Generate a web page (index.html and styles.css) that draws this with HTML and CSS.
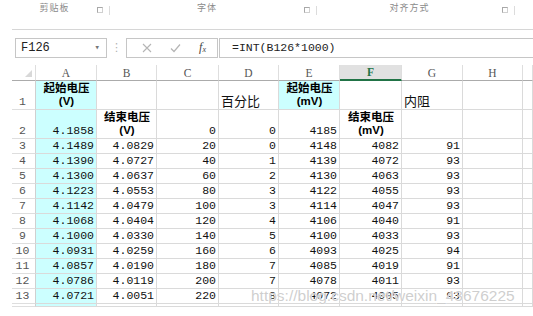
FILE: index.html
```html
<!DOCTYPE html>
<html>
<head>
<meta charset="utf-8">
<title>Sheet</title>
<link rel="stylesheet" href="styles.css">
</head>
<body>
<div class="ribbon">
  <div class="group g1"><span class="glabel">剪贴板</span><span class="launch"></span></div>
  <div class="group g2"><span class="glabel">字体</span><span class="launch"></span></div>
  <div class="group g3"><span class="glabel">对齐方式</span><span class="launch"></span></div>
</div>

<div class="fbar">
  <div class="namebox"><span>F126</span><span class="drop">&#9662;</span></div>
  <div class="dots">&#8942;</div>
  <div class="iconbox">
    <svg width="10" height="10" viewBox="0 0 10 10"><path d="M1 1L9 9M9 1L1 9" stroke="#b5b5b5" stroke-width="1.1" fill="none"/></svg>
    <svg width="11" height="10" viewBox="0 0 11 10"><path d="M1 5.5L4 8.5L10 1.5" stroke="#b5b5b5" stroke-width="1.2" fill="none"/></svg>
    <span class="fx">f<sub>x</sub></span>
  </div>
  <div class="formula">=INT(B126*1000)</div>
</div>

<div class="sheet">
  <div class="hd corner"><span class="tri"></span></div>
  <div class="hd">A</div><div class="hd">B</div><div class="hd">C</div><div class="hd">D</div>
  <div class="hd">E</div><div class="hd sel">F</div><div class="hd">G</div><div class="hd">H</div><div class="hd"></div>

  <div class="rh">1</div>
  <div class="c cy lbl"><span>起始电压</span><span>(V)</span></div>
  <div class="c"></div><div class="c"></div>
  <div class="c txt">百分比</div>
  <div class="c cy lbl"><span>起始电压</span><span>(mV)</span></div>
  <div class="c"></div>
  <div class="c txt">内阻</div>
  <div class="c"></div><div class="c"></div>

  <div class="rh">2</div>
  <div class="c cy n">4.1858</div>
  <div class="c lbl"><span>结束电压</span><span>(V)</span></div>
  <div class="c n">0</div><div class="c n">0</div><div class="c n">4185</div>
  <div class="c lbl"><span>结束电压</span><span>(mV)</span></div>
  <div class="c"></div><div class="c"></div><div class="c"></div>

  <div class="rh">3</div><div class="c cy n">4.1489</div><div class="c n">4.0829</div><div class="c n">20</div><div class="c n">0</div><div class="c n">4148</div><div class="c n">4082</div><div class="c n">91</div><div class="c"></div><div class="c"></div>
  <div class="rh">4</div><div class="c cy n">4.1390</div><div class="c n">4.0727</div><div class="c n">40</div><div class="c n">1</div><div class="c n">4139</div><div class="c n">4072</div><div class="c n">93</div><div class="c"></div><div class="c"></div>
  <div class="rh">5</div><div class="c cy n">4.1300</div><div class="c n">4.0637</div><div class="c n">60</div><div class="c n">2</div><div class="c n">4130</div><div class="c n">4063</div><div class="c n">93</div><div class="c"></div><div class="c"></div>
  <div class="rh">6</div><div class="c cy n">4.1223</div><div class="c n">4.0553</div><div class="c n">80</div><div class="c n">3</div><div class="c n">4122</div><div class="c n">4055</div><div class="c n">93</div><div class="c"></div><div class="c"></div>
  <div class="rh">7</div><div class="c cy n">4.1142</div><div class="c n">4.0479</div><div class="c n">100</div><div class="c n">3</div><div class="c n">4114</div><div class="c n">4047</div><div class="c n">93</div><div class="c"></div><div class="c"></div>
  <div class="rh">8</div><div class="c cy n">4.1068</div><div class="c n">4.0404</div><div class="c n">120</div><div class="c n">4</div><div class="c n">4106</div><div class="c n">4040</div><div class="c n">91</div><div class="c"></div><div class="c"></div>
  <div class="rh">9</div><div class="c cy n">4.1000</div><div class="c n">4.0330</div><div class="c n">140</div><div class="c n">5</div><div class="c n">4100</div><div class="c n">4033</div><div class="c n">93</div><div class="c"></div><div class="c"></div>
  <div class="rh">10</div><div class="c cy n">4.0931</div><div class="c n">4.0259</div><div class="c n">160</div><div class="c n">6</div><div class="c n">4093</div><div class="c n">4025</div><div class="c n">94</div><div class="c"></div><div class="c"></div>
  <div class="rh">11</div><div class="c cy n">4.0857</div><div class="c n">4.0190</div><div class="c n">180</div><div class="c n">7</div><div class="c n">4085</div><div class="c n">4019</div><div class="c n">91</div><div class="c"></div><div class="c"></div>
  <div class="rh">12</div><div class="c cy n">4.0786</div><div class="c n">4.0119</div><div class="c n">200</div><div class="c n">7</div><div class="c n">4078</div><div class="c n">4011</div><div class="c n">93</div><div class="c"></div><div class="c"></div>
  <div class="rh">13</div><div class="c cy n">4.0721</div><div class="c n">4.0051</div><div class="c n">220</div><div class="c n">8</div><div class="c n">4072</div><div class="c n">4005</div><div class="c n">93</div><div class="c"></div><div class="c"></div>

  <div class="rh"></div><div class="c cy"></div><div class="c"></div><div class="c"></div><div class="c"></div><div class="c"></div><div class="c"></div><div class="c"></div><div class="c"></div><div class="c"></div>
</div>

<div class="mark">https://blog.csdn.net/weixin_43676225</div>
</body>
</html>
```

FILE: styles.css
```css
* {
  box-sizing: border-box;
}
body {
  margin: 0;
  width: 533px;
  height: 316px;
  overflow: hidden;
  background: #fff;
  position: relative;
  font-family: "Liberation Mono", monospace;
  color: #000;
}

/* ribbon group labels, cut off at the top */
.ribbon {
  display: flex;
  height: 30px;
  margin-left: 12px;
  border-bottom: 1px solid #d6d6d6;
  overflow: hidden;
}
.group {
  display: flex;
  align-items: flex-start;
  padding-top: 3px;
}
.g1 { width: 98px; }
.g2 { width: 207px; }
.g3 { width: 198px; }
.glabel {
  flex: 1;
  text-align: center;
  font-family: "Noto Sans CJK SC", sans-serif;
  font-size: 9px;
  line-height: 10px;
  color: #8a8a8a;
  letter-spacing: 1px;
}
.launch {
  width: 6px;
  height: 6px;
  margin-top: 4px;
  margin-right: 6px;
  border: 1px solid #a8a8a8;
  border-right-color: #d0d0d0;
  border-bottom-color: #d0d0d0;
}
.group::after {
  content: "";
  width: 1px;
  height: 9px;
  margin-top: 3px;
  background: #dcdcdc;
}

/* formula bar */
.fbar {
  display: flex;
  align-items: center;
  height: 35px;
  padding-left: 15px;
}
.namebox {
  display: flex;
  align-items: center;
  justify-content: space-between;
  width: 92px;
  height: 20px;
  border: 1px solid #c6c6c6;
  padding: 0 6px 0 5px;
  font-size: 12px;
  color: #222;
}
.drop {
  font-size: 9px;
  color: #777;
}
.dots {
  width: 19px;
  text-align: center;
  color: #b0b0b0;
  font-family: "DejaVu Sans", sans-serif;
  font-size: 11px;
}
.iconbox {
  display: flex;
  align-items: center;
  justify-content: space-around;
  width: 92px;
  height: 20px;
  border: 1px solid #c6c6c6;
  padding: 0 2px 0 6px;
}
.fx {
  font-family: "Liberation Serif", serif;
  font-style: italic;
  font-size: 12px;
  color: #444;
}
.fx sub {
  font-size: 8px;
  vertical-align: -1px;
}
.formula {
  flex: 1;
  height: 20px;
  margin-left: 1px;
  border: 1px solid #c6c6c6;
  border-right: 0;
  padding-left: 12px;
  font-size: 11.5px;
  line-height: 18px;
  color: #222;
}

/* grid of cells */
.sheet {
  display: grid;
  grid-template-columns: 24px 61px 60px 62px 60px 61px 62px 61px 60px 10px;
  grid-template-rows: 16px 29px 29px repeat(11, 15px) 3px;
  margin-left: 12px;
}
.hd {
  display: flex;
  align-items: center;
  justify-content: center;
  border-right: 1px solid #dedede;
  border-bottom: 1px solid #ababab;
  font-family: "Liberation Serif", serif;
  font-size: 11.5px;
  color: #555;
}
.corner {
  justify-content: flex-end;
  align-items: flex-end;
  padding: 0 3px 3px 0;
}
.tri {
  width: 0;
  height: 0;
  border-left: 7px solid transparent;
  border-bottom: 7px solid #d8d8d8;
}
.sel {
  background: #e1e1e1;
  color: #217346;
  font-weight: bold;
  border-bottom: 2px solid #217346;
}
.rh {
  display: flex;
  align-items: flex-end;
  justify-content: center;
  padding: 0 2px 1px 0;
  border-right: 1px solid #d0d0d0;
  border-bottom: 1px solid #dedede;
  font-size: 11.5px;
  line-height: 13px;
  color: #555;
}
.c {
  display: flex;
  align-items: flex-end;
  padding: 0 2px 1px 3px;
  border-right: 1px solid #dadada;
  border-bottom: 1px solid #dadada;
  font-size: 11.5px;
  line-height: 13px;
  color: #111;
}
.cy {
  background: #ccffff;
}
.n {
  justify-content: flex-end;
}
.lbl {
  flex-direction: column;
  align-items: center;
  justify-content: flex-end;
  font-family: "Liberation Sans", "Noto Sans CJK SC", sans-serif;
  font-weight: bold;
  font-size: 11.5px;
  line-height: 13.5px;
  color: #000;
}
.lbl span:first-child {
  font-family: "Noto Sans CJK SC", sans-serif;
}
.txt {
  font-family: "Noto Sans CJK SC", sans-serif;
  font-size: 13px;
  line-height: 15px;
  padding-left: 2px;
}

/* blog watermark laid over the bottom rows */
.mark {
  position: absolute;
  left: 251px;
  top: 287px;
  font-family: "Liberation Sans", sans-serif;
  font-size: 15.5px;
  color: rgba(190, 190, 190, 0.75);
  text-shadow: 0 0 1px #fff, 0 0 1px #fff;
}
```
